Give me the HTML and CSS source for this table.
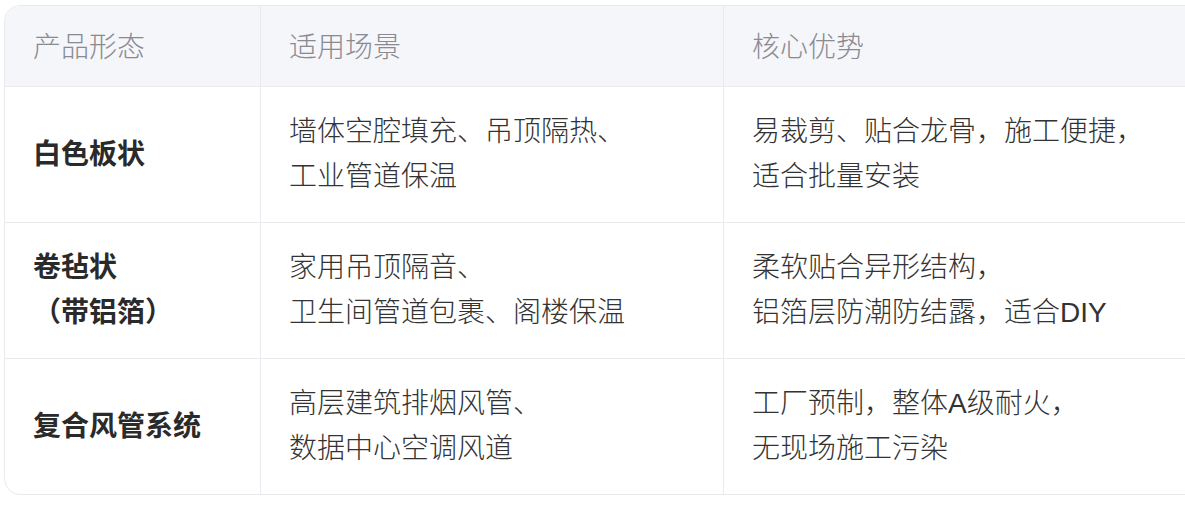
FILE: index.html
```html
<!DOCTYPE html>
<html lang="zh-CN">
<head>
<meta charset="utf-8">
<title>产品形态对比</title>
<link rel="stylesheet" href="styles.css">
</head>
<body>
<div class="frame">
  <div class="table-wrap">
    <table class="spec-table">
      <colgroup>
        <col class="col-form">
        <col class="col-scene">
        <col class="col-adv">
      </colgroup>
      <thead>
        <tr>
          <th>产品形态</th>
          <th>适用场景</th>
          <th>核心优势</th>
        </tr>
      </thead>
      <tbody>
        <tr>
          <td class="name">白色板状</td>
          <td>墙体空腔填充、吊顶隔热、<br>工业管道保温</td>
          <td>易裁剪、贴合龙骨，施工便捷，<br>适合批量安装</td>
        </tr>
        <tr>
          <td class="name">卷毡状<br>（带铝箔）</td>
          <td>家用吊顶隔音、<br>卫生间管道包裹、阁楼保温</td>
          <td>柔软贴合异形结构，<br>铝箔层防潮防结露，适合DIY</td>
        </tr>
        <tr>
          <td class="name">复合风管系统</td>
          <td>高层建筑排烟风管、<br>数据中心空调风道</td>
          <td>工厂预制，整体A级耐火，<br>无现场施工污染</td>
        </tr>
      </tbody>
    </table>
  </div>
</div>
</body>
</html>
```

FILE: styles.css
```css
html, body {
  margin: 0;
  padding: 0;
  background: #ffffff;
}

body {
  padding: 5px 0 0 4px;
  font-family: "Liberation Sans", "Noto Sans CJK SC", sans-serif;
  font-size: 28px;
  color: #333333;
}

.frame {
  width: 1181px;
  overflow: hidden;
}

.table-wrap {
  width: 1260px;
  border: 1px solid #e9e9ee;
  border-radius: 16px;
  overflow: hidden;
}

.spec-table {
  width: 100%;
  table-layout: fixed;
  border-collapse: separate;
  border-spacing: 0;
}

.col-form { width: 256px; }
.col-scene { width: 463px; }

.spec-table th,
.spec-table td {
  text-align: left;
  vertical-align: middle;
  padding: 22px 28px 23px 28px;
  line-height: 45px;
  border-right: 1px solid #e9e9ee;
  border-bottom: 1px solid #e9e9ee;
  font-weight: 300;
}

.spec-table th:last-child,
.spec-table td:last-child {
  border-right: none;
}

.spec-table tbody tr:last-child td {
  border-bottom: none;
}

.spec-table th {
  background: #f5f6fa;
  color: #8a8a92;
  padding-top: 19px;
  padding-bottom: 16px;
}

.spec-table td.name {
  font-weight: 700;
  color: #2a2a2a;
}
```
